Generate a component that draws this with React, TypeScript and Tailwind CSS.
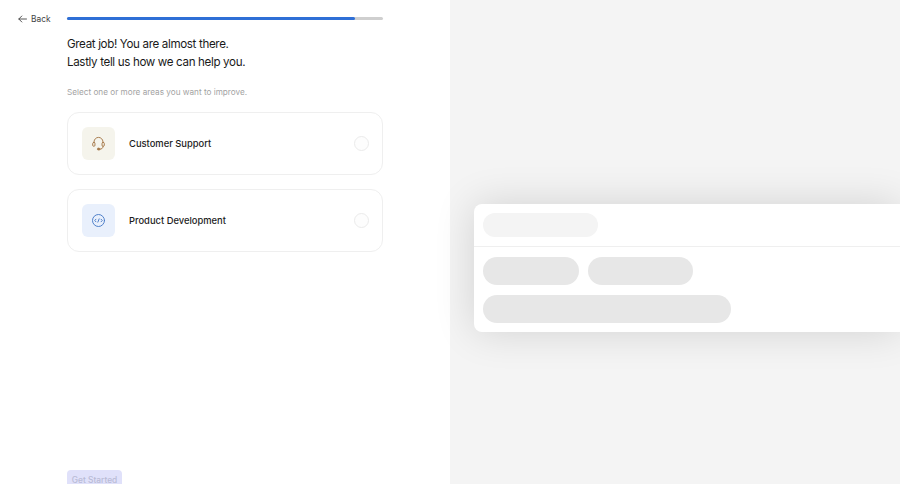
import React from "react";

function HeadsetIcon() {
  return (
    <svg width="15" height="15" viewBox="0 0 14 14" fill="none" stroke="#a5794a" strokeWidth="0.9" strokeLinecap="round" strokeLinejoin="round">
      <path d="M2.9 6.2V5.4a4.1 4.1 0 0 1 8.2 0v.8" />
      <rect x="1.6" y="6" width="2.1" height="3.6" rx="1" />
      <rect x="10.3" y="6" width="2.1" height="3.6" rx="1" />
      <path d="M11.3 9.6c0 1.7-1.2 2.7-3 2.7" />
      <rect x="6" y="11.5" width="2.4" height="1.5" rx="0.75" fill="#a5794a" />
    </svg>
  );
}

function CodeIcon() {
  return (
    <svg width="15" height="15" viewBox="0 0 14 14" fill="none" stroke="#4a7cc7" strokeWidth="0.9" strokeLinecap="round" strokeLinejoin="round">
      <circle cx="7" cy="7" r="5.6" />
      <path d="M4.6 5.8 3.5 7l1.1 1.2M9.4 5.8 10.5 7 9.4 8.2M7.6 5.5 6.4 8.5" />
    </svg>
  );
}

function OptionCard({ tile, icon, label }: { tile: string; icon: React.ReactNode; label: string }) {
  return (
    <div className="flex h-[63px] items-center rounded-xl border border-[#efefef] bg-white pl-[14px] pr-[14px]">
      <div className={`flex h-[33px] w-[33px] items-center justify-center rounded-md ${tile}`}>{icon}</div>
      <span className="ml-[14px] flex-1 pt-px text-[9.4px] font-medium text-[#1c1c1c]">{label}</span>
      <span className="h-[15px] w-[15px] translate-x-px rounded-full border border-[#ebebeb] bg-[#fdfdfd]" />
    </div>
  );
}

export default function App() {
  return (
    <div className="flex h-[484px] w-[900px] overflow-hidden bg-white font-['Inter',sans-serif]">
      <div className="flex h-[484px] w-[450px] shrink-0 items-start">
        <div className="flex w-[67px] shrink-0 items-center pl-[18px] pt-[13px] text-[#444]">
          <svg width="9" height="8" viewBox="0 0 9 8" fill="none" stroke="#444" strokeWidth="0.9" strokeLinecap="round" strokeLinejoin="round">
            <path d="M8.5 4H.8M3.8 1 .8 4l3 3" />
          </svg>
          <span className="ml-[4px] text-[8.4px] leading-[12px]">Back</span>
        </div>
        <div className="w-[316px] shrink-0 pt-[17px]">
          <div className="h-[3px] w-full rounded-full bg-[#cfcfcf]">
            <div className="h-[3px] w-[288px] rounded-full bg-[#2f6fd6]" />
          </div>
          <h1 className="mt-[16px] text-[11.6px] font-normal leading-[17.5px] tracking-[-0.35px] text-[#1a1a1a]">
            Great job! You are almost there.
            <br />
            Lastly tell us how we can help you.
          </h1>
          <p className="mt-[15px] text-[8.2px] leading-[12px] text-[#a3a3a3]">Select one or more areas you want to improve.</p>
          <div className="mt-[14px] flex flex-col gap-[14px]">
            <OptionCard tile="bg-[#f5f4ec]" icon={<HeadsetIcon />} label="Customer Support" />
            <OptionCard tile="bg-[#e9f0fc]" icon={<CodeIcon />} label="Product Development" />
          </div>
          <button className="mt-[218px] h-[24px] w-[55px] rounded-[4px] bg-[#e0e1fa] pb-[4px] text-[8.4px] font-medium text-[#b9bbd6]">
            Get Started
          </button>
        </div>
      </div>
      <div className="flex-1 bg-[#f4f4f4] pl-[24px] pt-[204px]">
        <div className="h-[128px] rounded-l-lg bg-white shadow-[0_0_40px_rgba(0,0,0,0.14)]">
          <div className="h-[43px] border-b border-[#efefef] pl-[9px] pt-[9px]">
            <div className="h-[24px] w-[115px] rounded-full bg-[#f4f4f4]" />
          </div>
          <div className="flex flex-col gap-[10px] pl-[9px] pt-[10px]">
            <div className="flex gap-[9px]">
              <div className="h-[28px] w-[96px] rounded-full bg-[#e7e7e7]" />
              <div className="h-[28px] w-[105px] rounded-full bg-[#e7e7e7]" />
            </div>
            <div className="h-[28px] w-[248px] rounded-full bg-[#e7e7e7]" />
          </div>
        </div>
      </div>
    </div>
  );
}
